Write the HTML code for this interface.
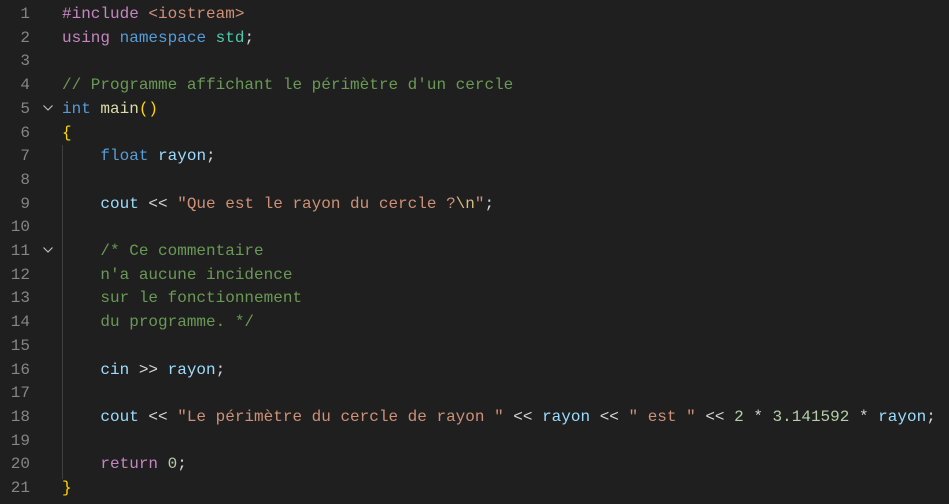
<!DOCTYPE html>
<html><head><meta charset="utf-8"><style>
html,body{margin:0;padding:0;background:#1f1f1f;width:949px;height:504px;overflow:hidden}
.ed{position:absolute;top:3px;left:0;font-family:"Liberation Mono",monospace;font-size:16px;line-height:23.7px}
.ln{position:absolute;top:0;left:0;width:30px;text-align:right;color:#858585;white-space:pre}
.code{position:absolute;top:0;left:62px;color:#d4d4d4;white-space:pre}
.f{position:absolute;left:42px;line-height:0}
.g{position:absolute;left:62px;width:1px;background:#404040}
.k{color:#c586c0}.b{color:#569cd6}.t{color:#4ec9b0}.c{color:#6a9955}.y{color:#dcdcaa}.p{color:#ffd700}.v{color:#9cdcfe}.s{color:#ce9178}.e{color:#d7ba7d}.n{color:#b5cea8}
</style></head><body>
<div class="g" style="top:145px;height:334px"></div>
<div class="ed"><div class="ln">1
2
3
4
5
6
7
8
9
10
11
12
13
14
15
16
17
18
19
20
21</div><div class="f" style="top:99px"><svg width="12" height="12" viewBox="0 0 12 12"><path d="M1.5 3.5 L6 8 L10.5 3.5" stroke="#c5c5c5" stroke-width="1.1" fill="none"/></svg></div><div class="f" style="top:241px"><svg width="12" height="12" viewBox="0 0 12 12"><path d="M1.5 3.5 L6 8 L10.5 3.5" stroke="#c5c5c5" stroke-width="1.1" fill="none"/></svg></div><div class="code"><span class="k">#include</span> <span class="s">&lt;iostream&gt;</span>
<span class="k">using</span> <span class="b">namespace</span> <span class="t">std</span>;

<span class="c">// Programme affichant le périmètre d'un cercle</span>
<span class="b">int</span> <span class="y">main</span><span class="p">()</span>
<span class="p">{</span>
    <span class="b">float</span> <span class="v">rayon</span>;

    <span class="v">cout</span> &lt;&lt; <span class="s">"Que est le rayon du cercle ?</span><span class="e">\n</span><span class="s">"</span>;

    <span class="c">/* Ce commentaire</span>
<span class="c">    n'a aucune incidence</span>
<span class="c">    sur le fonctionnement</span>
<span class="c">    du programme. */</span>

    <span class="v">cin</span> &gt;&gt; <span class="v">rayon</span>;

    <span class="v">cout</span> &lt;&lt; <span class="s">"Le périmètre du cercle de rayon "</span> &lt;&lt; <span class="v">rayon</span> &lt;&lt; <span class="s">" est "</span> &lt;&lt; <span class="n">2</span> * <span class="n">3.141592</span> * <span class="v">rayon</span>;

    <span class="k">return</span> <span class="n">0</span>;
<span class="p">}</span></div></div>
</body></html>
